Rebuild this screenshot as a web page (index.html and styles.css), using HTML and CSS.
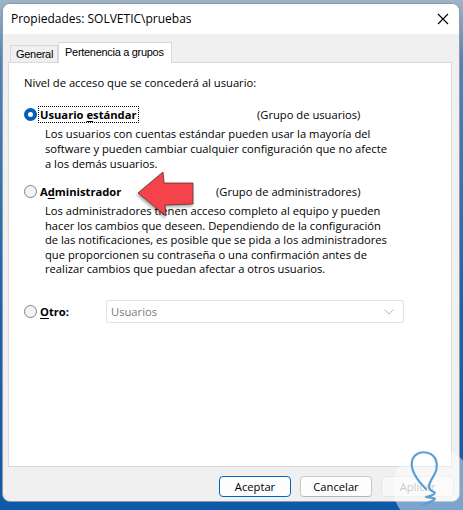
FILE: index.html
```html
<!DOCTYPE html>
<html lang="es">
<head>
<meta charset="utf-8">
<title>Propiedades</title>
<link rel="stylesheet" href="styles.css">
</head>
<body>
<div class="window">
  <div class="titlebar">
    <span class="title">Propiedades: SOLVETIC\pruebas</span>
    <svg class="close" width="12" height="12" viewBox="0 0 12 12"><path d="M1 1 L11 11 M11 1 L1 11" stroke="#000" stroke-width="1.1" fill="none"/></svg>
  </div>
  <div class="tabs">
    <div class="tab">General</div>
    <div class="tab active">Pertenencia a grupos</div>
  </div>
  <div class="panel">
    <p class="intro">Nivel de acceso que se concederá al usuario:</p>
    <div class="option">
      <div class="row">
        <span class="radio checked"></span>
        <span class="label w1"><span class="focus">Usuario <u>e</u>stándar</span></span>
        <span class="group">(Grupo de usuarios)</span>
      </div>
      <p class="desc">Los usuarios con cuentas estándar pueden usar la mayoría del<br>software y pueden cambiar cualquier configuración que no afecte<br>a los demás usuarios.</p>
    </div>
    <div class="option">
      <div class="row">
        <span class="radio"></span>
        <span class="label w2"><span class="plain">A<u>d</u>ministrador</span></span>
        <span class="group">(Grupo de administradores)</span>
      </div>
      <p class="desc d2">Los administradores tienen acceso completo al equipo y pueden<br>hacer los cambios que deseen. Dependiendo de la configuración<br>de las notificaciones, es posible que se pida a los administradores<br>que proporcionen su contraseña o una confirmación antes de<br>realizar cambios que puedan afectar a otros usuarios.</p>
    </div>
    <div class="row other">
      <span class="radio"></span>
      <span class="label w3"><span class="plain"><u>O</u>tro:</span></span>
      <div class="combo">
        <span>Usuarios</span>
        <svg width="10" height="6" viewBox="0 0 10 6"><path d="M0.5 0.5 L5 5 L9.5 0.5" stroke="#b8b8b8" stroke-width="1" fill="none"/></svg>
      </div>
    </div>
  </div>
  <div class="footer">
    <button class="btn default">Aceptar</button>
    <button class="btn">Cancelar</button>
    <button class="btn disabled">Aplicar</button>
  </div>
</div>
<svg class="arrow" width="70" height="50" viewBox="0 0 70 50">
  <polygon points="3,24 28,3 29,14 58,14 58,35 30,36 31,47" fill="#f4434a" stroke="#5a3030" stroke-width="0.8" stroke-linejoin="round"/>
</svg>
<div class="mark">
  <svg width="80" height="80" viewBox="0 0 80 80">
    <path d="M30 40 C22 32 14 22 16 12 C18 4 26 2 32 4 C40 6 42 14 40 22 C38 28 33 32 33 38 C33 41 36 42 38 43 C41 45 34 47 30 48 C37 49 42 49 36 52 C33 54 29 55 26 56" stroke="#5a9fd6" stroke-width="2.2" fill="none" stroke-linecap="round" stroke-linejoin="round"/>
  </svg>
</div>
</body>
</html>
```
FILE: styles.css
```css
html, body {
  margin: 0;
  padding: 0;
}
body {
  width: 463px;
  height: 510px;
  overflow: hidden;
  background: linear-gradient(180deg, #9fb3c6 0px, #4f84b8 60px, #1c64ad 300px, #0f5aa8 510px);
  font-family: "Open Sans", "Noto Sans", sans-serif;
  font-size: 11.2px;
  color: #000;
  position: relative;
}
.window {
  position: relative;
  margin: 3px 3px 0 2px;
  width: 458px;
  height: 499px;
  box-sizing: border-box;
  border: 1px solid #8d9aa6;
  border-radius: 8px;
  background: #f0f0f0;
  display: flex;
  flex-direction: column;
  overflow: hidden;
}
.titlebar {
  height: 30px;
  background: #ffffff;
  display: flex;
  align-items: center;
  justify-content: space-between;
  padding: 0 10px 0 8px;
  flex: none;
}
.title {
  font-size: 12px;
  margin-top: -1px;
}
.close {
  display: block;
  margin-top: -1px;
}
.tabs {
  display: flex;
  align-items: flex-end;
  height: 28px;
  padding-left: 7px;
  flex: none;
}
.tab {
  height: 17px;
  padding: 0 4px 0 5px;
  border: 1px solid #d9d9d9;
  border-bottom: none;
  background: #f0f0f0;
  line-height: 17px;
  font-family: "Liberation Sans", sans-serif;
  font-size: 11px;
  letter-spacing: -0.3px;
  margin-bottom: -1px;
}
.tab.active {
  height: 20px;
  background: #fff;
  border-color: #d9d9d9;
  padding: 0 7px 0 6px;
  line-height: 18px;
  position: relative;
  z-index: 1;
}
.panel {
  flex: none;
  height: 405px;
  margin: 0 7px 0 5px;
  background: #fff;
  border: 1px solid #d9d9d9;
  box-sizing: border-box;
  padding: 12px 0 0 15px;
}
.intro {
  margin: 0;
  line-height: 16px;
}
.row {
  display: flex;
  align-items: center;
  height: 16px;
}
.option .row {
  margin-top: 15px;
}
.option + .option .row {
  margin-top: 12px;
}
.radio {
  width: 13px;
  height: 13px;
  box-sizing: border-box;
  border-radius: 50%;
  border: 1px solid #808080;
  background: #f3f3f3;
  flex: none;
}
.radio.checked {
  border: 4px solid #005fb8;
  background: #fff;
}
.label {
  flex: none;
  font-weight: bold;
  margin-left: 2px;
}
.label u {
  text-decoration-thickness: 1px;
  text-underline-offset: 2px;
}
.focus {
  outline: 1px dotted #000;
  outline-offset: 0;
  padding: 0 1px;
}
.plain {
  padding: 0 1px;
}
.w1 { width: 218px; }
.w2 { width: 177px; }
.w3 { width: 67px; }
.desc {
  margin: 4px 0 0 21px;
  line-height: 15px;
  white-space: nowrap;
}
.desc.d2 {
  margin-top: 5px;
  line-height: 14.6px;
}
.other {
  margin-top: 27px;
}
.combo {
  width: 298px;
  height: 23px;
  box-sizing: border-box;
  border: 1px solid #e3e3e3;
  border-radius: 2px;
  display: flex;
  align-items: center;
  justify-content: space-between;
  padding: 0 9px 0 4px;
  color: #7a7a7a;
  background: #fff;
}
.combo svg {
  display: block;
}
.footer {
  flex: 1;
  display: flex;
  justify-content: flex-end;
  align-items: flex-start;
  gap: 9px;
  padding: 9px 5px 0 0;
}
.btn {
  width: 72px;
  height: 21px;
  box-sizing: border-box;
  border: 1px solid #c9c9c9;
  border-bottom-color: #b5b5b5;
  border-radius: 4px;
  background: #fdfdfd;
  font-family: "Open Sans", "Noto Sans", sans-serif;
  font-size: 11.2px;
  color: #000;
  padding: 0;
  line-height: 18px;
}
.btn.default {
  border: 1px solid #0067c0;
}
.btn.disabled {
  width: 73px;
  color: #a0a0a0;
  border-color: #e5e5e5;
  background: #f7f7f7;
}
.arrow {
  position: absolute;
  left: 135px;
  top: 169px;
  filter: drop-shadow(-1px 2px 1.5px rgba(0,0,0,0.35));
}
.mark {
  position: absolute;
  left: 393px;
  top: 447px;
  width: 80px;
  height: 80px;
  border-radius: 50%;
  background: rgba(255,255,255,0.45);
}
.mark svg {
  position: absolute;
  left: 3px;
  top: 2px;
}
```
